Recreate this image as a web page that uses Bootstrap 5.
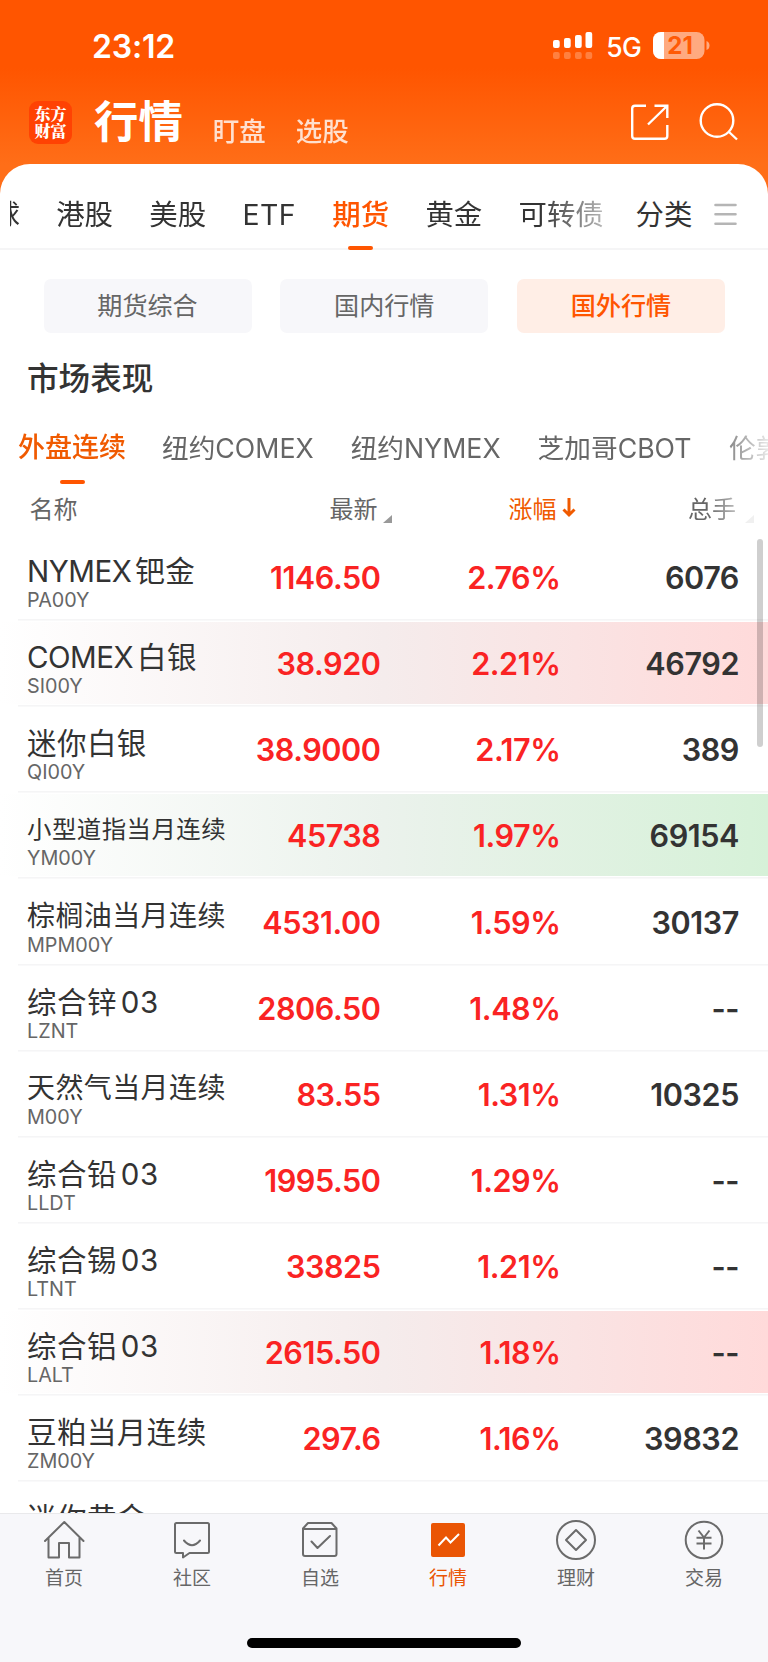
<!DOCTYPE html>
<html lang="zh-CN">
<head>
<meta charset="utf-8">
<meta name="viewport" content="width=device-width, initial-scale=1">
<title>行情</title>
<link href="https://cdn.jsdelivr.net/npm/bootstrap@5.3.0/dist/css/bootstrap.min.css" rel="stylesheet">
<style>
body{font-family:Inter,"Noto Sans CJK SC",sans-serif;color:#333;background:#fff;font-size:28px;line-height:1}
.screen{width:768px;height:1662px}
.top-bar{height:194px;background:linear-gradient(#ff5500 0,#ff5500 68px,#ff6e18 165px)}
.status{height:90px;padding:0 58px 0 92px}
.clock{font-size:32px;font-weight:600;line-height:34px;margin-top:30px;letter-spacing:-.2px}
.signal{margin:31px 13px 0 0}
.net{font-size:26.5px;font-weight:500;line-height:32px;margin:31px 12px 0 0;letter-spacing:-.7px}
.battery{margin-top:31px;width:57px;height:29px}
.battery svg{display:block}
.battery b{left:7px;top:0;width:40px;line-height:29px;font-size:24px;color:#ff5a05;font-weight:700;text-align:center}
.title-bar{height:73px;padding:0 30px 0 29px}
.logo{width:43px;height:43px;margin-top:11px;border-radius:9px;background:#ff4203;font:900 16px/17px "Noto Serif CJK SC","Noto Sans CJK SC",sans-serif;padding-top:4px}
.page-title{font-size:44.4px;font-weight:700;line-height:44px;margin:10px 0 0 22px}
.side-title{font-size:26.5px;font-weight:500;line-height:30px;margin:25.5px 0 0 30px;opacity:.8}
.sheet{margin-top:-30.5px;border-radius:30px 30px 0 0;background:#fff}
.tabs-main{height:86.5px;border-bottom:2px solid #f5f5f6;font-size:28.4px;line-height:102px}
.tabs-clip{width:604px;height:86.5px;margin-left:10px;overflow:hidden;-webkit-mask:linear-gradient(90deg,#000 530px,rgba(0,0,0,.35) 594px);mask:linear-gradient(90deg,#000 530px,rgba(0,0,0,.35) 594px)}
.tabs-clip .strip{gap:36.3px;margin-left:-18.5px;height:86px}
.picked{color:#ff5500;font-weight:500}
.picked::after{content:"";position:absolute;left:50%;width:25px;height:3.5px;margin-left:-12.5px;border-radius:2px;background:#ff5500}
.tabs-main .picked::after{top:82.5px}
.pills{padding:29px 43px 0 43.5px;gap:28.7px}
.pill{height:53.5px;line-height:55px;border-radius:7px;background:#f7f7fa;color:#666;font-size:25.1px;text-align:center;flex:1 1 0}
.pill.on{background:#ffeee6;color:#ff5500;font-weight:500}
.sect{font-size:31.6px;font-weight:500;line-height:40px;margin:26px 0 0 27px}
.tabs-sub{font-size:26.7px;color:#666;height:56px;line-height:40px;margin-top:29.5px;padding-left:18px;overflow:hidden;-webkit-mask:linear-gradient(90deg,#000 715px,rgba(0,0,0,.15) 768px);mask:linear-gradient(90deg,#000 715px,rgba(0,0,0,.15) 768px)}
.tabs-sub .picked{color:#f05a00;font-size:27px}
.tabs-sub .picked::after{top:52px}
.thead-row{height:51px;font-size:24px;color:#666;line-height:51px;padding-left:29.5px}
.fade-end{-webkit-mask:linear-gradient(90deg,#000 20px,rgba(0,0,0,.3) 55px);mask:linear-gradient(90deg,#000 20px,rgba(0,0,0,.3) 55px)}
.quotes{height:977.5px;overflow:hidden}
.q{height:86.13px;padding-left:27px;background:linear-gradient(#f5f5f6,#f5f5f6) 18px 84px/100% 1.6px no-repeat}
.q.up{background:linear-gradient(#f5f5f6,#f5f5f6) 18px 84px/100% 1.6px no-repeat,linear-gradient(90deg,#fff,#f5ecec 50%,#ffdada) 0 1px/100% 82px no-repeat}
.q.down{background:linear-gradient(#f5f5f6,#f5f5f6) 18px 84px/100% 1.6px no-repeat,linear-gradient(90deg,#fff,#ebf2ec 50%,#d6f1d8) 0 1px/100% 82px no-repeat}
.nm{width:203px;white-space:nowrap}
.nm div{font-size:29.5px;line-height:36px;margin-top:18px;letter-spacing:.45px}
.nm .s7{font-size:28px;letter-spacing:.4px}
.nm .s8{font-size:24.4px;letter-spacing:.5px}
.nm .lat{letter-spacing:-.5px}
.nm p{font-size:19.8px;line-height:22px;margin:0;color:#666;letter-spacing:0}
.num{font-size:30.6px;font-weight:600;line-height:86px;text-align:right;letter-spacing:-.45px}
.n1{width:150.5px}.n2{width:180px}.n3{width:178.5px}
.r{color:#fa2323}
.scroll-thumb{left:757px;top:539px;width:5.5px;height:208px;border-radius:3px;background:rgba(0,0,0,.19)}
.dock{height:150px;background:#f7f7fa;border-top:1.5px solid #e9e9eb;font-size:19px;color:#666}
.dock a{color:inherit;text-decoration:none;width:128px;text-align:center;padding-top:5.5px;line-height:24px}
.dock svg{display:block;margin:0 auto 5.5px}
.dock a.on{color:#ea5504}
.home-line{width:274.5px;height:9.5px;border-radius:5px;background:#000;margin:47.5px auto 0}
</style>
</head>
<body>
<div class="screen position-relative overflow-hidden">
<header class="top-bar text-white">
  <div class="status d-flex align-items-start">
    <span class="clock me-auto">23:12</span>
    <svg class="signal" width="40" height="29" fill="#fff"><rect y="9" width="6.7" height="8" rx="2"/><rect x="11" y="7" width="6.7" height="10" rx="2"/><rect x="22" y="4" width="6.7" height="13" rx="2"/><rect x="32.5" y="1" width="6.7" height="16" rx="2"/><g opacity=".25"><rect y="21" width="6.7" height="7" rx="2"/><rect x="11" y="21" width="6.7" height="7" rx="2"/><rect x="22" y="21" width="6.7" height="7" rx="2"/><rect x="32.5" y="21" width="6.7" height="7" rx="2"/></g></svg>
    <span class="net">5G</span>
    <div class="battery position-relative"><svg width="57" height="29"><defs><clipPath id="bat"><rect x="0" y="1" width="51.500" height="27" rx="8"/></clipPath></defs><g clip-path="url(#bat)"><rect width="53" height="29" fill="#ffaa80"/><rect width="11" height="29" fill="#fff"/></g><path d="M53.500 10q3 1 3 4.500t-3 4.500z" fill="#ffaa80"/></svg><b class="position-absolute">21</b></div>
  </div>
  <div class="title-bar d-flex align-items-start">
    <div class="logo text-center">东方<br>财富</div>
    <span class="page-title">行情</span>
    <span class="side-title">盯盘</span>
    <span class="side-title">选股</span>
    <svg class="ms-auto" style="margin-top:12px" width="108" height="42" fill="none" stroke="#fff" stroke-width="2.400"><path d="M16 3.700H5Q2.200 3.700 2.200 6.500V34Q2.200 36.800 5 36.800H34.500Q37.300 36.800 37.300 34V23M24.500 3.700H37.300V16M37 4L18 22.500"/><circle cx="87" cy="18.500" r="16.300"/><path d="M98.500 29.500L107 37.500"/></svg>
  </div>
</header>
<main class="sheet position-relative">
  <nav class="tabs-main d-flex">
    <div class="tabs-clip"><div class="strip d-flex text-nowrap"><span>球</span><span>港股</span><span>美股</span><span style="letter-spacing:.5px">ETF</span><span class="picked position-relative">期货</span><span>黄金</span><span>可转债</span></div></div>
    <span style="margin-left:21.500px">分类</span>
    <svg style="margin:39px 0 0 22px" width="23" height="24" stroke="#b5b5b5" stroke-width="2.600" stroke-linecap="round"><path d="M1.500 2h20M1.500 11.300h20M1.500 20.700h20"/></svg>
  </nav>
  <div class="pills d-flex"><div class="pill">期货综合</div><div class="pill">国内行情</div><div class="pill on">国外行情</div></div>
  <h2 class="sect">市场表现</h2>
  <nav class="tabs-sub d-flex text-nowrap"><span class="picked position-relative">外盘连续</span><span style="margin-left:36px">纽约COMEX</span><span style="margin-left:37px">纽约NYMEX</span><span style="margin-left:37px">芝加哥CBOT</span><span style="margin-left:37.500px">伦敦</span></nav>
  <div class="thead-row d-flex">
    <span style="width:300px">名称</span>
    <span style="width:179px">最新<svg width="9" height="9" style="margin:17px 0 0 5px;vertical-align:-6px"><path d="M9 0V8H0z" fill="#999"/></svg></span>
    <span style="width:179.500px;color:#f05a00">涨幅<svg width="14" height="20" style="margin-left:5px;vertical-align:0" fill="none" stroke="#f05a00" stroke-width="3"><path d="M7 0V17M1.500 11.500L7 17L12.500 11.500"/></svg></span>
    <span class="fade-end">总手<svg width="9" height="9" style="margin-left:9px;vertical-align:-6px"><path d="M9 0V8H0z" fill="#ccc"/></svg></span>
  </div>
  <section class="quotes">
    <div class="q d-flex"><div class="nm"><div><span class="lat">NYMEX</span><span class="ms-1">钯金</span></div><p>PA00Y</p></div><span class="num n1 r">1146.50</span><span class="num n2 r">2.76%</span><span class="num n3">6076</span></div>
    <div class="q up d-flex"><div class="nm"><div><span class="lat">COMEX</span><span class="ms-1">白银</span></div><p>SI00Y</p></div><span class="num n1 r">38.920</span><span class="num n2 r">2.21%</span><span class="num n3">46792</span></div>
    <div class="q d-flex"><div class="nm"><div>迷你白银</div><p>QI00Y</p></div><span class="num n1 r">38.9000</span><span class="num n2 r">2.17%</span><span class="num n3">389</span></div>
    <div class="q down d-flex"><div class="nm"><div class="s8">小型道指当月连续</div><p>YM00Y</p></div><span class="num n1 r">45738</span><span class="num n2 r">1.97%</span><span class="num n3">69154</span></div>
    <div class="q d-flex"><div class="nm"><div class="s7">棕榈油当月连续</div><p>MPM00Y</p></div><span class="num n1 r">4531.00</span><span class="num n2 r">1.59%</span><span class="num n3">30137</span></div>
    <div class="q d-flex"><div class="nm"><div>综合锌<span class="ms-1">03</span></div><p>LZNT</p></div><span class="num n1 r">2806.50</span><span class="num n2 r">1.48%</span><span class="num n3">--</span></div>
    <div class="q d-flex"><div class="nm"><div class="s7">天然气当月连续</div><p>M00Y</p></div><span class="num n1 r">83.55</span><span class="num n2 r">1.31%</span><span class="num n3">10325</span></div>
    <div class="q d-flex"><div class="nm"><div>综合铅<span class="ms-1">03</span></div><p>LLDT</p></div><span class="num n1 r">1995.50</span><span class="num n2 r">1.29%</span><span class="num n3">--</span></div>
    <div class="q d-flex"><div class="nm"><div>综合锡<span class="ms-1">03</span></div><p>LTNT</p></div><span class="num n1 r">33825</span><span class="num n2 r">1.21%</span><span class="num n3">--</span></div>
    <div class="q up d-flex"><div class="nm"><div>综合铝<span class="ms-1">03</span></div><p>LALT</p></div><span class="num n1 r">2615.50</span><span class="num n2 r">1.18%</span><span class="num n3">--</span></div>
    <div class="q d-flex"><div class="nm"><div>豆粕当月连续</div><p>ZM00Y</p></div><span class="num n1 r">297.6</span><span class="num n2 r">1.16%</span><span class="num n3">39832</span></div>
    <div class="q d-flex"><div class="nm"><div>迷你黄金</div></div></div>
  </section>
</main>
<footer class="dock">
  <div class="d-flex">
    <a href="#"><svg width="42" height="42" fill="none" stroke="#6b6b6b" stroke-width="2" stroke-linejoin="round" stroke-linecap="round"><path d="M2 22L21.300 3L40.500 22M5.500 19V38.500H16V24H26V38.500H36.500V19"/></svg>首页</a>
    <a href="#"><svg width="42" height="42" fill="none" stroke="#6b6b6b" stroke-width="2" stroke-linejoin="round" stroke-linecap="round"><path d="M6 4H36.500Q38 4 38 5.500V32.500Q38 34 36.500 34H18.500L12 38.500V34H5.500Q4 34 4 32.500V5.500Q4 4 5.500 4M13 21.500Q21 31 29 21.500"/></svg>社区</a>
    <a href="#"><svg width="42" height="42" fill="none" stroke="#6b6b6b" stroke-width="2" stroke-linejoin="round" stroke-linecap="round"><path d="M9 4H32.500L37.500 9.500V35Q37.500 37 35.500 37H6Q4 37 4 35V9.500ZM4.500 10H37M12.500 22.500L18.500 29L31 17"/></svg>自选</a>
    <a href="#" class="on"><svg width="42" height="42"><rect x="4" y="4" width="34" height="34" rx="2" fill="#ea5504"/><path d="M11.500 26.500L19 18.500L23.500 23.500L32 15" fill="none" stroke="#fff" stroke-width="2"/></svg>行情</a>
    <a href="#"><svg width="42" height="42" fill="none" stroke="#6b6b6b" stroke-width="2"><circle cx="21" cy="21" r="19"/><path d="M21 11L31 21L21 31L11 21Z" stroke-linejoin="round"/></svg>理财</a>
    <a href="#"><svg width="42" height="42" fill="none" stroke="#6b6b6b" stroke-width="2"><circle cx="21" cy="21" r="18.300"/><path d="M15.500 11.500L21 18.500L26.500 11.500M21 18.500V30.500M13.500 18.700H28.500M13.500 24.500H28.500"/></svg>交易</a>
  </div>
  <div class="home-line"></div>
</footer>
<div class="scroll-thumb position-absolute"></div>
</div>
<script src="https://cdn.jsdelivr.net/npm/bootstrap@5.3.0/dist/js/bootstrap.bundle.min.js"></script>
</body>
</html>
